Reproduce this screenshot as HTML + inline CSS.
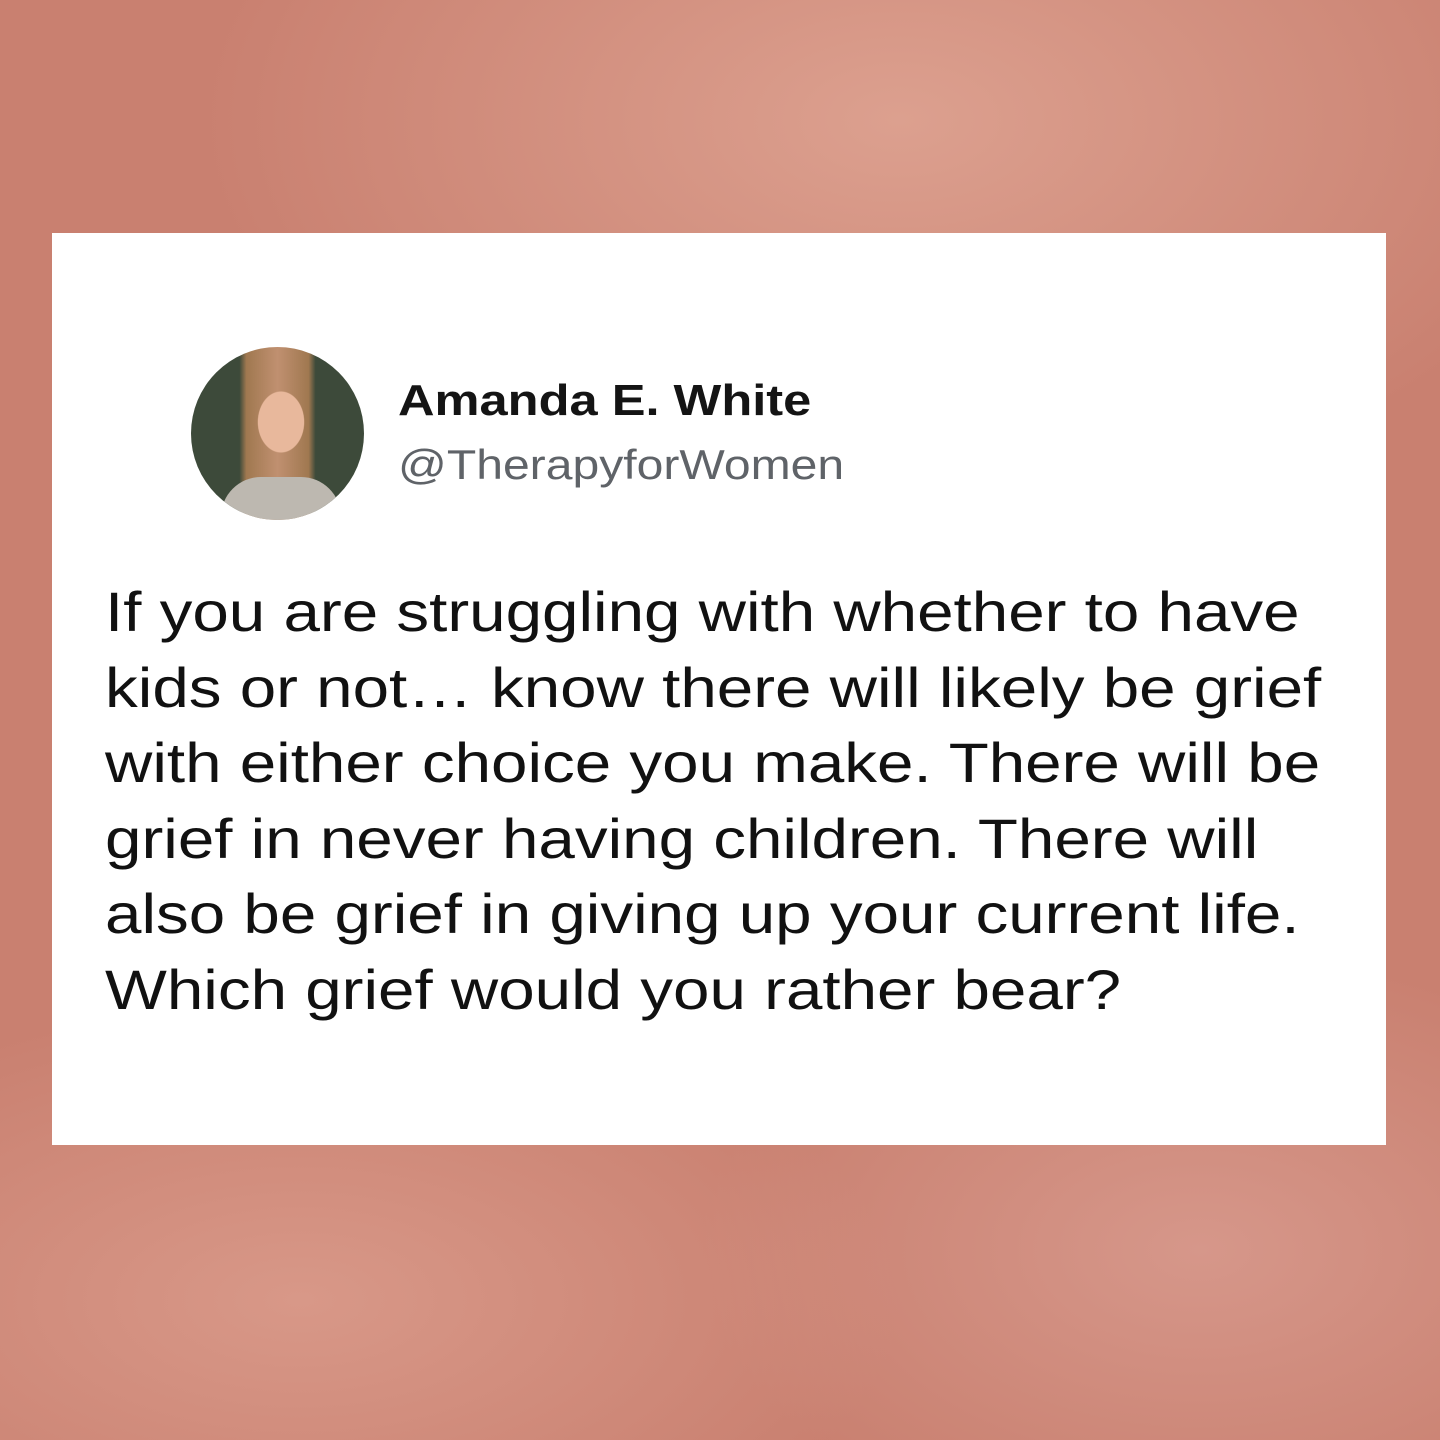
<!DOCTYPE html>
<html><head><meta charset="utf-8"><style>
html,body{margin:0;padding:0}
body{width:1440px;height:1440px;position:relative;overflow:hidden;
background:radial-gradient(ellipse 700px 400px at 900px 120px,#dca08f,transparent),
radial-gradient(ellipse 600px 300px at 300px 1300px,#d89888,transparent),
radial-gradient(ellipse 500px 300px at 1200px 1250px,#d6978a,transparent),
#c98070;font-family:"Liberation Sans",Arial,sans-serif}
.card{position:absolute;left:52px;top:233px;width:1334px;height:912px;background:#fff}
.av{position:absolute;left:191px;top:347px;width:173px;height:173px;border-radius:50%;
background:radial-gradient(ellipse 38px 50px at 90px 75px,#e8b89c 60%,transparent 62%),
linear-gradient(90deg,#3d4a3a 0,#3d4a3a 28%,#a07850 32%,#c09070 50%,#a07850 68%,#3d4a3a 72%);overflow:hidden}
.av:after{content:"";position:absolute;left:30px;top:130px;width:120px;height:60px;background:#bdb8b0;border-radius:40px 40px 0 0}
.name{position:absolute;left:398px;top:376px;font-size:44px;font-weight:bold;color:#141414;white-space:nowrap;transform:scaleX(1.15);transform-origin:0 0}
.handle{position:absolute;left:398px;top:441px;font-size:42px;color:#5f6368;white-space:nowrap;transform:scaleX(1.145);transform-origin:0 0}
.t{position:absolute;left:105px;font-size:56px;color:#111;white-space:nowrap;line-height:1;transform:scaleX(1.17);transform-origin:0 0}
</style></head><body>
<div class="card"></div>
<div class="av"></div>
<div class="name">Amanda E. White</div>
<div class="handle">@TherapyforWomen</div>
<div class="t" style="top:584px">If you are struggling with whether to have</div>
<div class="t" style="top:660px">kids or not… know there will likely be grief</div>
<div class="t" style="top:735px">with either choice you make. There will be</div>
<div class="t" style="top:811px">grief in never having children. There will</div>
<div class="t" style="top:886px">also be grief in giving up your current life.</div>
<div class="t" style="top:962px">Which grief would you rather bear?</div>
</body></html>
